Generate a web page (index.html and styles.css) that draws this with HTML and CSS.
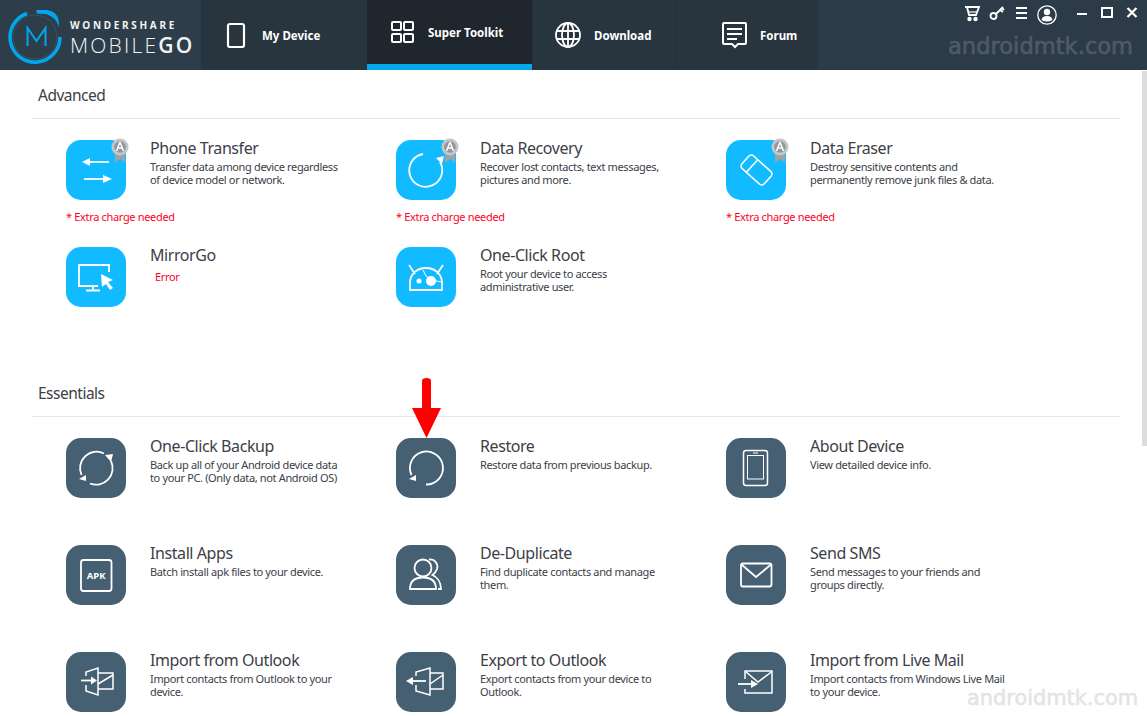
FILE: index.html
```html
<!DOCTYPE html>
<html lang="en">
<head>
    <meta charset="UTF-8">
    <title>Wondershare MobileGo</title>
    <link rel="stylesheet" href="styles.css">
</head>
<body>
<div class="app">
    <header class="topbar">
        <div class="logo">
            <svg class="logo-mark" width="64" height="70" viewBox="0 0 64 70" fill="none">
                <circle cx="35" cy="37" r="22" stroke="#3a5160" stroke-width="1"/>
                <path d="M27 13.500 A25 25 0 1 0 60 37" stroke="#00a7ec" stroke-width="3.500"/>
                <path d="M36 10 L47 10 Q60 12 59 27 Q56 17 46 14 L37 13.500 Z" fill="#00a7ec"/>
                <path d="M27.500 46 V28 L36.500 41 L45.500 28 V46" stroke="#00a7ec" stroke-width="2"/>
            </svg>
            <div class="logo-text">
                <div class="logo-top">WONDERSHARE</div>
                <div class="logo-name">MOBILE<b>GO</b></div>
            </div>
        </div>
        <nav class="tabs">
            <div class="tab">
                <svg width="48" height="48" viewBox="0 0 48 48" fill="none" stroke="#fff" stroke-width="2.2"><rect x="14" y="13" width="16" height="23" rx="2"/></svg>
                <span>My Device</span>
            </div>
            <div class="tab tab-active">
                <svg width="48" height="48" viewBox="0 0 48 48" fill="none" stroke="#fff" stroke-width="2"><rect x="12" y="14" width="9" height="8" rx="1"/><rect x="24" y="14" width="9" height="8" rx="1"/><rect x="12" y="26" width="9" height="8" rx="1"/><rect x="24" y="26" width="9" height="8" rx="1"/></svg>
                <span>Super Toolkit</span>
            </div>
            <div class="tab tab-small">
                <svg width="48" height="48" viewBox="0 0 48 48" fill="none" stroke="#fff" stroke-width="1.8"><circle cx="22" cy="24" r="12"/><ellipse cx="22" cy="24" rx="6" ry="12"/><path d="M22 12 V36 M10.500 20 H33.500 M10.500 28 H33.500"/></svg>
                <span>Download</span>
            </div>
            <div class="tab tab-small tab-forum">
                <svg width="48" height="48" viewBox="0 0 48 48" fill="none" stroke="#fff" stroke-width="2"><path d="M12 12 H33 Q34 12 34 13 V32 Q34 33 33 33 H26 L23 36 L20 33 H12 Q11 33 11 32 V13 Q11 12 12 12 Z"/><path d="M15 18 H30 M15 23 H30 M15 28 H25"/></svg>
                <span>Forum</span>
            </div>
        </nav>
        <div class="window-controls">
            <svg width="20" height="20" viewBox="0 0 20 20" fill="none" stroke="#fff" stroke-width="1.8"><path d="M3 4 H17 L14 12 H7 L5 4"/><path d="M7 9 H15" stroke-width="1.200"/><circle cx="7.500" cy="16" r="1.300" fill="#fff"/><circle cx="13.500" cy="16" r="1.300" fill="#fff"/></svg>
            <svg width="20" height="20" viewBox="0 0 20 20" fill="none" stroke="#fff" stroke-width="1.800"><circle cx="6.500" cy="13" r="3"/><path d="M9 11 L16 4 M13 7 L16 9 M15 5 L17 7"/></svg>
            <svg width="20" height="20" viewBox="0 0 20 20" stroke="#fff" stroke-width="2"><path d="M4 5 H15 M4 10 H15 M4 15 H15"/></svg>
            <svg class="win-user" width="24" height="24" viewBox="0 0 24 24" fill="none"><circle cx="12" cy="12" r="9.200" stroke="#fff" stroke-width="1.300"/><circle cx="12" cy="9" r="3.200" fill="#fff"/><path d="M6.500 17 Q7 13 12 13 Q17 13 17.500 17 Q12 20 6.500 17 Z" fill="#fff"/></svg>
            <svg class="win-min" width="20" height="20" viewBox="0 0 20 20" stroke="#fff" stroke-width="2"><path d="M5 11 H15"/></svg>
            <svg class="win-max" width="20" height="20" viewBox="0 0 20 20" fill="none" stroke="#fff" stroke-width="2"><rect x="5" y="5" width="10" height="9"/></svg>
            <svg width="20" height="20" viewBox="0 0 20 20" stroke="#fff" stroke-width="2.200"><path d="M5.500 5 L14.500 14 M14.500 5 L5.500 14"/></svg>
        </div>
    </header>

    <main class="content">
        <section class="section">
            <h2 class="section-title">Advanced</h2>
            <div class="grid">
                <div class="item">
                    <div class="icon icon-blue">
                        <svg width="60" height="60" viewBox="0 0 60 60" fill="none" stroke="#fff" stroke-width="1.800"><path d="M43 22 H20"/><path d="M16 22 L24 18 V26 Z" fill="#fff" stroke="none"/><path d="M18 39 H40"/><path d="M46 39 L37 35 V43 Z" fill="#fff" stroke="none"/></svg>
                        <span class="medal"><svg width="18" height="26" viewBox="0 0 18 26"><path d="M4 12 V25 L9 21 L14 25 V12 Z" fill="#9aa3a9"/><circle cx="9" cy="9" r="8.500" fill="#c4c6c8"/><circle cx="9" cy="9" r="5.800" fill="#8f979d"/><path d="M9 4 L5.500 13 M9 4 L12.500 13 M7 10 H11" stroke="#fff" stroke-width="1.500" fill="none"/></svg></span>
                    </div>
                    <div class="item-text">
                        <h3>Phone Transfer</h3>
                        <p>Transfer data among device regardless<br>of device model or network.</p>
                    </div>
                    <div class="extra"><i>*</i> Extra charge needed</div>
                </div>
                <div class="item">
                    <div class="icon icon-blue">
                        <svg width="60" height="60" viewBox="0 0 60 60" fill="none" stroke="#fff" stroke-width="1.800"><path d="M27 14 A16.500 16.500 0 1 0 44 22"/><path d="M40 18 L48 16 L46 24 Z" fill="#fff" stroke="none"/></svg>
                        <span class="medal"><svg width="18" height="26" viewBox="0 0 18 26"><path d="M4 12 V25 L9 21 L14 25 V12 Z" fill="#9aa3a9"/><circle cx="9" cy="9" r="8.500" fill="#c4c6c8"/><circle cx="9" cy="9" r="5.800" fill="#8f979d"/><path d="M9 4 L5.500 13 M9 4 L12.500 13 M7 10 H11" stroke="#fff" stroke-width="1.500" fill="none"/></svg></span>
                    </div>
                    <div class="item-text">
                        <h3>Data Recovery</h3>
                        <p>Recover lost contacts, text messages,<br>pictures and more.</p>
                    </div>
                    <div class="extra"><i>*</i> Extra charge needed</div>
                </div>
                <div class="item">
                    <div class="icon icon-blue">
                        <svg width="60" height="60" viewBox="0 0 60 60" fill="none" stroke="#fff" stroke-width="1.600"><g transform="rotate(42 30.500 30)"><rect x="15.500" y="21.500" width="30" height="17" rx="3.500"/><path d="M24.500 21.500 V38.500"/></g></svg>
                        <span class="medal"><svg width="18" height="26" viewBox="0 0 18 26"><path d="M4 12 V25 L9 21 L14 25 V12 Z" fill="#9aa3a9"/><circle cx="9" cy="9" r="8.500" fill="#c4c6c8"/><circle cx="9" cy="9" r="5.800" fill="#8f979d"/><path d="M9 4 L5.500 13 M9 4 L12.500 13 M7 10 H11" stroke="#fff" stroke-width="1.500" fill="none"/></svg></span>
                    </div>
                    <div class="item-text">
                        <h3>Data Eraser</h3>
                        <p>Destroy sensitive contents and<br>permanently remove junk files &amp; data.</p>
                    </div>
                    <div class="extra"><i>*</i> Extra charge needed</div>
                </div>
                <div class="item">
                    <div class="icon icon-blue">
                        <svg width="60" height="60" viewBox="0 0 60 60" fill="none" stroke="#fff" stroke-width="1.800"><path d="M32 39 H13 V18 H43 V25"/><path d="M27 39 V43 M20 43.500 H34"/><path d="M35 27 L47 33 L42 35 L47 41 L44 43 L40 37 L36 40 Z" fill="#fff" stroke="none"/></svg>
                    </div>
                    <div class="item-text">
                        <h3>MirrorGo</h3>
                        <p class="error">Error</p>
                    </div>
                </div>
                <div class="item">
                    <div class="icon icon-blue">
                        <svg width="60" height="60" viewBox="0 0 60 60" fill="none" stroke="#fff" stroke-width="1.800"><path d="M14 43 V36 C14 27 21 21 30 21 C39 21 46 27 46 36 V43 Z"/><path d="M13 18 L19 27 M47 18 L41 27"/><circle cx="23" cy="34" r="2.500" fill="#fff" stroke="none"/><circle cx="35" cy="34" r="5" fill="#fff" stroke="none"/><path d="M27 23 L30 29 L35 33 L46 35" stroke-width="1"/></svg>
                    </div>
                    <div class="item-text">
                        <h3>One-Click Root</h3>
                        <p>Root your device to access<br>administrative user.</p>
                    </div>
                </div>
            </div>
        </section>

        <section class="section">
            <h2 class="section-title">Essentials</h2>
            <div class="grid">
                <div class="item">
                    <div class="icon icon-slate">
                        <svg width="60" height="60" viewBox="0 0 60 60" fill="none" stroke="#fff" stroke-width="1.800"><path d="M15.500 37 A16.500 16.500 0 0 1 38 15.500"/><path d="M45 23 A16.500 16.500 0 0 1 24 45.500"/><path d="M39 17 L47 16 L45 24 Z" fill="#fff" stroke="none"/><path d="M13 41 L20 37 V43 Z" fill="#fff" stroke="none"/></svg>
                    </div>
                    <div class="item-text">
                        <h3>One-Click Backup</h3>
                        <p>Back up all of your Android device data<br>to your PC. (Only data, not Android OS)</p>
                    </div>
                </div>
                <div class="item">
                    <div class="icon icon-slate">
                        <svg width="60" height="60" viewBox="0 0 60 60" fill="none" stroke="#fff" stroke-width="1.800"><path d="M15.500 37 A16.500 16.500 0 1 1 30 46.500"/><path d="M13 41 L20 37 V43 Z" fill="#fff" stroke="none"/></svg>
                    </div>
                    <div class="item-text">
                        <h3>Restore</h3>
                        <p>Restore data from previous backup.</p>
                    </div>
                </div>
                <div class="item">
                    <div class="icon icon-slate">
                        <svg width="60" height="60" viewBox="0 0 60 60" fill="none" stroke="#fff" stroke-width="1.500"><rect x="17.500" y="12.500" width="24" height="35" rx="2.500"/><rect x="21.500" y="17.500" width="16" height="23.500" stroke-width="1"/><path d="M27 15 H32" stroke-width="1"/></svg>
                    </div>
                    <div class="item-text">
                        <h3>About Device</h3>
                        <p>View detailed device info.</p>
                    </div>
                </div>
                <div class="item">
                    <div class="icon icon-slate">
                        <svg width="60" height="60" viewBox="0 0 60 60" fill="none" stroke="#fff" stroke-width="1.800"><rect x="15" y="15" width="30.500" height="31" rx="2.500"/><text x="30.200" y="34" class="apk-label">APK</text></svg>
                    </div>
                    <div class="item-text">
                        <h3>Install Apps</h3>
                        <p>Batch install apk files to your device.</p>
                    </div>
                </div>
                <div class="item">
                    <div class="icon icon-slate">
                        <svg width="60" height="60" viewBox="0 0 60 60" fill="none" stroke="#fff" stroke-width="1.800"><circle cx="27" cy="23" r="8.500"/><path d="M14 44 C14 36 19 32.500 27 32.500 C35 32.500 40 36 40 44 Z"/><path d="M33 14.500 C39 14 42.500 19 41 24 C40 27 38 29 36.500 30 C41 32 45 37 45 44 H42"/></svg>
                    </div>
                    <div class="item-text">
                        <h3>De-Duplicate</h3>
                        <p>Find duplicate contacts and manage<br>them.</p>
                    </div>
                </div>
                <div class="item">
                    <div class="icon icon-slate">
                        <svg width="60" height="60" viewBox="0 0 60 60" fill="none" stroke="#fff" stroke-width="1.800"><rect x="15" y="18.500" width="30.500" height="23" rx="2"/><path d="M15.500 19.500 L30 32 L45 19.500"/></svg>
                    </div>
                    <div class="item-text">
                        <h3>Send SMS</h3>
                        <p>Send messages to your friends and<br>groups directly.</p>
                    </div>
                </div>
                <div class="item">
                    <div class="icon icon-slate">
                        <svg width="60" height="60" viewBox="0 0 60 60" fill="none" stroke="#fff" stroke-width="1.500"><path d="M20 24 V20 L32 16 V43 L20 39 V33"/><path d="M32 21 H47 V37 H32 M32 32 L47 23"/><path d="M15 28.500 H26" stroke-width="1.800"/><path d="M31 28.500 L25 24.500 V32.500 Z" fill="#fff" stroke="none"/></svg>
                    </div>
                    <div class="item-text">
                        <h3>Import from Outlook</h3>
                        <p>Import contacts from Outlook to your<br>device.</p>
                    </div>
                </div>
                <div class="item">
                    <div class="icon icon-slate">
                        <svg width="60" height="60" viewBox="0 0 60 60" fill="none" stroke="#fff" stroke-width="1.500"><path d="M20 24 V20 L34 16 V43 L20 39 V33"/><path d="M34 21 H47 V37 H34 M34 32 L47 23"/><path d="M16 29 H30" stroke-width="1.800"/><path d="M10 29 L17 25 V33 Z" fill="#fff" stroke="none"/></svg>
                    </div>
                    <div class="item-text">
                        <h3>Export to Outlook</h3>
                        <p>Export contacts from your device to<br>Outlook.</p>
                    </div>
                </div>
                <div class="item">
                    <div class="icon icon-slate">
                        <svg width="60" height="60" viewBox="0 0 60 60" fill="none" stroke="#fff" stroke-width="1.500"><path d="M19 27 V19 H46 V41 H19 V37"/><path d="M19.500 19.500 L32 30 L46 19.500"/><path d="M12 32 H26" stroke-width="1.800"/><path d="M32 32 L25 28 V36 Z" fill="#fff" stroke="none"/></svg>
                    </div>
                    <div class="item-text">
                        <h3>Import from Live Mail</h3>
                        <p>Import contacts from Windows Live Mail<br>to your device.</p>
                    </div>
                </div>
            </div>
        </section>
    </main>

    <svg class="red-arrow" width="32" height="62" viewBox="0 0 32 62"><path d="M11 3 Q11 0 15.500 0 Q20 0 20 3 V30 H30 L15.500 60 L1 30 H11 Z" fill="#ff0000"/></svg>
    <div class="scroll-thumb"></div>
    <div class="watermark wm-top">androidmtk.com</div>
    <div class="watermark wm-bottom">androidmtk.com</div>
</div>
</body>
</html>
```

FILE: styles.css
```css
body {
    margin: 0;
    background: #fff;
    font-family: "Noto Sans", "DejaVu Sans", sans-serif;
    color: #3c4047;
}

.app {
    position: relative;
    height: 716px;
    overflow: hidden;
}

.topbar {
    display: flex;
    height: 70px;
    background: #2c3b47;
}

.logo {
    display: flex;
    width: 200px;
    margin-right: 1px;
    background: #2d3d49;
}

.logo-mark {
    flex: none;
}

.logo-text {
    margin-left: 6px;
    padding-top: 18px;
    color: #f2f4f5;
}

.logo-top {
    font-size: 10px;
    line-height: 14px;
    font-weight: 700;
    letter-spacing: 2.7px;
    white-space: nowrap;
}

.logo-name {
    font-family: "Open Sans", sans-serif;
    font-size: 21px;
    line-height: 26px;
    font-weight: 300;
    letter-spacing: 2.2px;
    white-space: nowrap;
}

.logo-name b {
    font-weight: 600;
}

.tabs {
    display: flex;
    gap: 1px;
    background: #26313b;
}

.tab {
    display: flex;
    align-items: center;
    box-sizing: border-box;
    width: 165px;
    height: 70px;
    padding-left: 13px;
    background: #28343e;
    color: #fff;
    font-size: 11.5px;
    font-weight: 700;
}

.tab-active {
    background: #1f262e;
    border-bottom: 6px solid #00a8ec;
    padding-top: 6px;
}

.tab-active svg {
    margin-top: -6px;
}

.tab-active span {
    margin-top: -6px;
}

.tab-small {
    width: 143px;
}

.tab-forum {
    width: 141px;
    padding-left: 35px;
}

.window-controls {
    display: flex;
    align-items: flex-start;
    margin-left: 144px;
    padding-top: 3px;
    gap: 5px;
}

.window-controls svg {
    flex: none;
}

.window-controls .win-user {
    margin-left: -2px;
}

.window-controls .win-min {
    margin-left: 8px;
}

.content {
    padding: 0 27px 0 32px;
}

.section {
    margin-bottom: 14px;
}

.section-title {
    height: 48px;
    margin: 0;
    padding-left: 6px;
    border-bottom: 1px solid #e8e8e4;
    font-size: 15.5px;
    line-height: 50px;
    font-weight: 400;
    letter-spacing: -0.5px;
}

.grid {
    display: grid;
    grid-template-columns: repeat(3, 330px);
    grid-auto-rows: 107px;
    padding: 21px 0 0 34px;
}

.item {
    position: relative;
    display: flex;
}

.icon {
    position: relative;
    flex: none;
    width: 60px;
    height: 60px;
    border-radius: 15px;
}

.icon svg {
    display: block;
}

.icon-blue {
    background: #12bbff;
}

.icon-slate {
    background: #455f73;
}

.medal {
    position: absolute;
    top: -2px;
    right: -3px;
}

.item-text {
    margin-left: 24px;
    margin-top: -1px;
}

.item-text h3 {
    margin: 0;
    font-size: 16px;
    line-height: 18px;
    font-weight: 400;
    letter-spacing: -0.42px;
    white-space: nowrap;
}

.item-text p {
    margin: 3px 0 0;
    font-size: 11px;
    line-height: 13px;
    letter-spacing: -0.35px;
    white-space: nowrap;
}

.item-text p.error {
    margin: 6px 0 0 5px;
    color: #ff0026;
}

.extra {
    position: absolute;
    left: 0;
    top: 70px;
    font-size: 11px;
    line-height: 14px;
    letter-spacing: -0.33px;
    color: #ff0026;
}

.extra i {
    font-style: normal;
}

.apk-label {
    fill: #fff;
    stroke: none;
    font-size: 9.5px;
    font-weight: 700;
    text-anchor: middle;
}

.red-arrow {
    position: absolute;
    left: 411px;
    top: 378px;
}

.scroll-thumb {
    position: absolute;
    left: 1142px;
    top: 71px;
    width: 5px;
    height: 375px;
    background: #dcdcdc;
}

.watermark {
    position: absolute;
    font-family: "DejaVu Sans", sans-serif;
    line-height: 30px;
    white-space: nowrap;
    -webkit-text-stroke: 0.6px currentColor;
}

.wm-top {
    left: 948px;
    top: 31px;
    font-size: 22.6px;
    color: #4f5b63;
}

.wm-bottom {
    left: 967px;
    top: 683px;
    font-size: 20.9px;
    color: #e4e4e4;
}
```
